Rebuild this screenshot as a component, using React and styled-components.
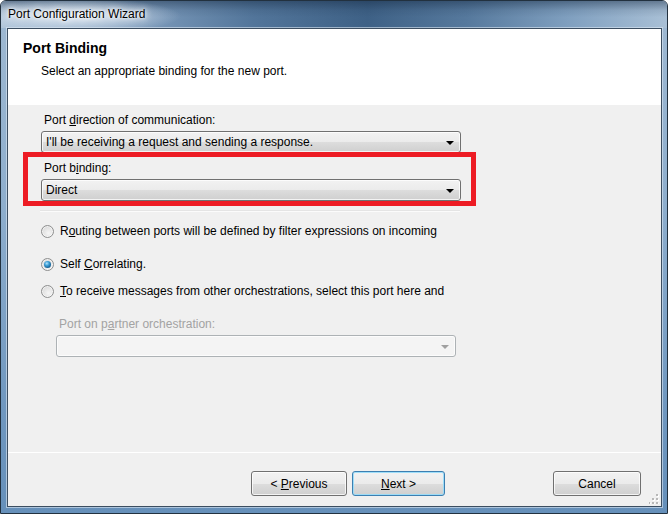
import { createGlobalStyle, styled } from "styled-components";

const GlobalStyle = createGlobalStyle`
  html, body {
    margin: 0;
    padding: 0;
    background: #ffffff;
  }
  body {
    font-family: "Liberation Sans", Arial, sans-serif;
    font-size: 12px;
    color: #000;
  }
`;

const Janela = styled.div`
  box-sizing: border-box;
  width: 668px;
  height: 514px;
  display: flex;
  flex-direction: column;
  border: 1px solid #22313f;
  border-radius: 6px 6px 0 0;
  overflow: hidden;
  background: linear-gradient(180deg, #9fb9d2 0%, #8eaecd 40%, #6f97bf 80%, #6690ba 100%);
`;

const BarraTitulo = styled.div`
  height: 27px;
  flex-shrink: 0;
  padding-left: 7px;
  line-height: 27px;
  font-size: 12px;
  color: #000;
  text-shadow: 0 0 6px #fff, 0 0 10px #fff, 0 0 3px #fff;
  background:
    radial-gradient(ellipse 105px 18px at 75px 15px, rgba(226, 235, 244, 0.95), rgba(226, 235, 244, 0) 100%),
    linear-gradient(180deg, rgba(20, 40, 65, 0.45) 0%, rgba(20, 40, 65, 0.1) 35%, rgba(20, 40, 65, 0) 60%),
    linear-gradient(90deg, #aec3d8 0%, #7f9dbd 20%, #52759a 38%, #3e6186 55%, #56799d 70%, #7f9fbf 85%, #a9c0d6 100%);
`;

const AreaCliente = styled.div`
  flex: 1;
  display: flex;
  flex-direction: column;
  margin: 0 5px 6px 6px;
  border: 1px solid #3c4e61;
  box-shadow: 0 0 0 1px rgba(220, 232, 243, 0.6);
  background: #f0f0f0;
  min-height: 0;
`;

const Cabecalho = styled.div`
  height: 76px;
  flex-shrink: 0;
  box-sizing: border-box;
  background: #fff;
  padding: 11px 0 0 15px;
`;

const TituloPagina = styled.div`
  font-weight: bold;
  font-size: 14px;
  line-height: 17px;
`;

const Subtitulo = styled.div`
  margin: 7px 0 0 18px;
  line-height: 15px;
`;

const Corpo = styled.div`
  flex: 1;
  position: relative;
  padding: 0 0 0 33px;
  display: flex;
  flex-direction: column;
  align-items: flex-start;
`;

const Rotulo = styled.div`
  line-height: 15px;
  margin-top: ${(p) => p.$topo}px;
  margin-bottom: 3px;
  padding-left: ${(p) => p.$recuo ?? 3}px;
  color: ${(p) => (p.$desativado ? "#a3a3a3" : "#000")};
`;

const Combo = styled.div`
  box-sizing: border-box;
  width: ${(p) => p.$largura}px;
  height: 22px;
  margin-left: ${(p) => p.$recuo ?? 0}px;
  display: flex;
  align-items: center;
  justify-content: space-between;
  padding: 0 6px 0 4px;
  border: 1px solid ${(p) => (p.$desativado ? "#adb2b5" : "#707070")};
  border-radius: 3px;
  background: ${(p) =>
    p.$desativado
      ? "#f4f4f4"
      : "linear-gradient(180deg, #f2f2f2 0%, #ebebeb 50%, #dddddd 51%, #cfcfcf 100%)"};
  box-shadow: inset 0 0 0 1px rgba(255, 255, 255, 0.75);
  line-height: 15px;
`;

const Seta = styled.span`
  width: 0;
  height: 0;
  border-left: 4px solid transparent;
  border-right: 4px solid transparent;
  border-top: 4px solid ${(p) => (p.$desativado ? "#a0a0a0" : "#000")};
  margin-top: 1px;
`;

const Divisoria = styled.div`
  width: 420px;
  height: 1px;
  margin: 10px 0 0 -1px;
  background: #fbfbfb;
  box-shadow: 0 -1px 0 #e4e4e4;
`;

const LinhaOpcao = styled.label`
  display: flex;
  align-items: center;
  gap: 6px;
  height: 16px;
  line-height: 16px;
  margin-top: ${(p) => p.$topo}px;
  white-space: nowrap;
`;

const Radio = styled.span`
  position: relative;
  box-sizing: border-box;
  width: 13px;
  height: 13px;
  border-radius: 50%;
  border: 1px solid #8e8f8f;
  background: radial-gradient(circle at 60% 65%, #f6f6f6 0%, #e2e2e2 55%, #cfcfcf 100%);
  box-shadow: inset 0 0 0 1px rgba(255, 255, 255, 0.6);
  flex-shrink: 0;

  &::after {
    content: "";
    display: ${(p) => (p.$marcado ? "block" : "none")};
    position: absolute;
    left: 2px;
    top: 2px;
    width: 7px;
    height: 7px;
    border-radius: 50%;
    background: radial-gradient(circle at 40% 35%, #b4e3fb 0%, #3d9fd6 35%, #145a8d 75%, #0c3f66 100%);
  }
`;

const Rodape = styled.div`
  position: relative;
  height: 54px;
  flex-shrink: 0;
  box-sizing: border-box;
  border-top: 1px solid #fff;
  padding: 18px 20px 0 0;
  display: flex;
  align-items: flex-start;
  justify-content: flex-end;
`;

const Botao = styled.button`
  box-sizing: border-box;
  width: ${(p) => p.$largura}px;
  height: 25px;
  margin-left: ${(p) => p.$margem ?? 0}px;
  padding: 0;
  font-family: "Liberation Sans", Arial, sans-serif;
  font-size: 12px;
  color: #000;
  border: 1px solid ${(p) => (p.$padrao ? "#3c7fb1" : "#707070")};
  border-radius: 3px;
  background: linear-gradient(180deg, #f2f2f2 0%, #ebebeb 50%, #dddddd 51%, #cfcfcf 100%);
  box-shadow: inset 0 0 0 1px ${(p) => (p.$padrao ? "rgba(150, 220, 250, 0.9)" : "rgba(255, 255, 255, 0.75)")};
`;

const Alca = styled.svg`
  position: absolute;
  right: 2px;
  bottom: 2px;
`;

const MarcacaoVermelha = styled.div`
  position: absolute;
  left: 15px;
  top: 47px;
  width: 453px;
  height: 54px;
  box-sizing: border-box;
  border: 5px solid #ed1c24;
  pointer-events: none;
`;

const Grip = () => (
  <Alca width="10" height="10" viewBox="0 0 10 10">
    {[
      [7, 0],
      [7, 4],
      [3, 4],
      [7, 8],
      [3, 8],
      [-1, 8],
    ].map(([x, y]) => (
      <g key={`${x}-${y}`}>
        <rect x={x + 1} y={y + 1} width="2" height="2" fill="#fff" />
        <rect x={x} y={y} width="2" height="2" fill="#b8b8b8" />
      </g>
    ))}
  </Alca>
);

export default function App() {
  return (
    <>
      <GlobalStyle />
      <Janela>
        <BarraTitulo>Port Configuration Wizard</BarraTitulo>
        <AreaCliente>
          <Cabecalho>
            <TituloPagina>Port Binding</TituloPagina>
            <Subtitulo>Select an appropriate binding for the new port.</Subtitulo>
          </Cabecalho>

          <Corpo>
            <Rotulo $topo={8}>
              Port <u>d</u>irection of communication:
            </Rotulo>
            <Combo $largura={420}>
              <span>I'll be receiving a request and sending a response.</span>
              <Seta />
            </Combo>

            <Rotulo $topo={8}>
              Port b<u>i</u>nding:
            </Rotulo>
            <Combo $largura={420}>
              <span>Direct</span>
              <Seta />
            </Combo>

            <Divisoria />

            <LinhaOpcao $topo={11}>
              <Radio />
              <span>
                R<u>o</u>uting between ports will be defined by filter expressions on incoming
              </span>
            </LinhaOpcao>
            <LinhaOpcao $topo={17}>
              <Radio $marcado />
              <span>
                Self <u>C</u>orrelating.
              </span>
            </LinhaOpcao>
            <LinhaOpcao $topo={11}>
              <Radio />
              <span>
                <u>T</u>o receive messages from other orchestrations, select this port here and
              </span>
            </LinhaOpcao>

            <Rotulo $topo={18} $recuo={18} $desativado>
              Port on p<u>a</u>rtner orchestration:
            </Rotulo>
            <Combo $largura={400} $recuo={15} $desativado>
              <span />
              <Seta $desativado />
            </Combo>

            <MarcacaoVermelha />
          </Corpo>

          <Rodape>
            <Botao $largura={96}>
              &lt; <u>P</u>revious
            </Botao>
            <Botao $largura={93} $margem={5} $padrao>
              <u>N</u>ext &gt;
            </Botao>
            <Botao $largura={88} $margem={108}>
              Cancel
            </Botao>
            <Grip />
          </Rodape>
        </AreaCliente>
      </Janela>
    </>
  );
}
